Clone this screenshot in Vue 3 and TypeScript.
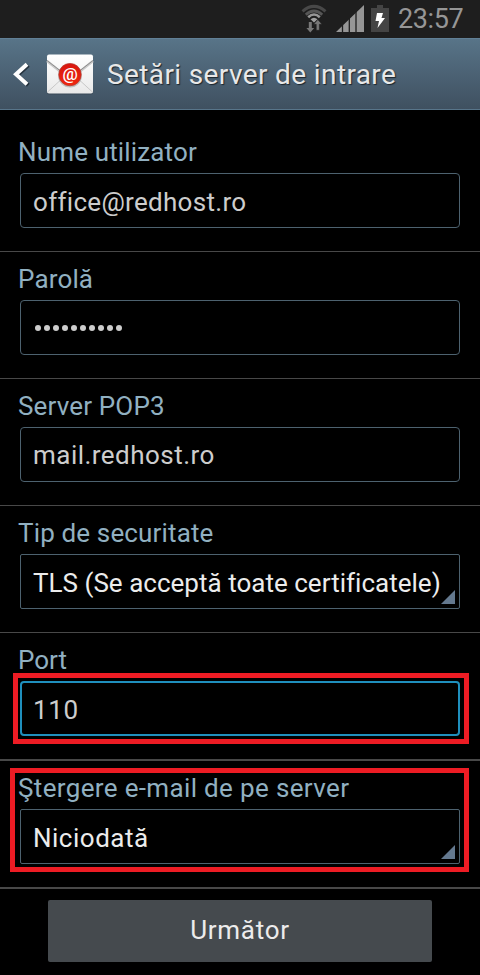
<script setup lang="ts">
interface Field {
  id: string
  label: string
  value: string
  kind: 'text' | 'password' | 'select'
  focused?: boolean
  mark?: 'box' | 'row'
}

const fields: Field[] = [
  { id: 'user', label: 'Nume utilizator', value: 'office@redhost.ro', kind: 'text' },
  { id: 'password', label: 'Parolă', value: '', kind: 'password' },
  { id: 'server', label: 'Server POP3', value: 'mail.redhost.ro', kind: 'text' },
  { id: 'security', label: 'Tip de securitate', value: 'TLS (Se acceptă toate certificatele)', kind: 'select' },
  { id: 'port', label: 'Port', value: '110', kind: 'text', focused: true, mark: 'box' },
  { id: 'delete', label: 'Ştergere e-mail de pe server', value: 'Niciodată', kind: 'select', mark: 'row' },
]
</script>

<template>
  <div class="screen">
    <div class="status">
      <svg class="wifi" width="28" height="30" viewBox="0 0 28 30">
        <g fill="none">
          <path d="M2.500 8.300Q14 -1.500 25.500 8.300" stroke="#484848" stroke-width="3" />
          <path d="M5.800 11.700Q14 4.300 22.200 11.700" stroke="#565656" stroke-width="2.800" />
          <path d="M8.200 14.200Q14 8.800 19.800 14.200" stroke="#969696" stroke-width="2.600" />
        </g>
        <path d="M10.500 16.300Q14 13.300 17.500 16.300L14 19.500Z" fill="#a0a0a0" />
        <path d="M8.800 19h3v6h2.400L10.300 29.500 6.400 25h2.400Z" fill="#777" />
        <path d="M16.200 27.300v-6h-2.600L17.800 16.500 22 21.300h-2.600v6Z" fill="#777" stroke="#1e1e1e" stroke-width=".6" />
      </svg>
      <svg class="signal" width="28" height="27" viewBox="0 0 28 27">
        <path d="M0 27L28 0V27Z" fill="#969696" />
        <path d="M6.500 20v7M13.300 13v14M20 6v21" stroke="#1e1e1e" stroke-width="1.300" />
      </svg>
      <svg class="battery" width="18" height="27" viewBox="0 0 18 27">
        <path d="M6 0h6v3h6v24H0V3h6Z" fill="#444" />
        <path d="M6 8h6L10.500 13H14L6.500 23l1.500-7H4.500Z" fill="#fff" />
      </svg>
      <span class="clock">23:57</span>
    </div>

    <header class="header">
      <svg class="back" width="17" height="25" viewBox="0 0 17 25">
        <path d="M14.500 3L3.500 13 14.500 23" fill="none" stroke="#25323e" stroke-width="4" transform="translate(.8 .3)" />
        <path d="M14 2.300L3 12.300 14 22.300" fill="none" stroke="#fff" stroke-width="4" />
      </svg>
      <svg class="mail" width="48" height="42" viewBox="0 0 48 42">
        <defs>
          <linearGradient id="paper" x1="0" y1="0" x2="0" y2="1">
            <stop offset="0" stop-color="#fff" />
            <stop offset="1" stop-color="#e9e9e9" />
          </linearGradient>
          <linearGradient id="seal" x1="0" y1="0" x2="0" y2="1">
            <stop offset="0" stop-color="#d8150e" />
            <stop offset="1" stop-color="#f02810" />
          </linearGradient>
        </defs>
        <rect x="1" y="2" width="46" height="39.500" rx="2" fill="#34414c" opacity=".6" />
        <rect x="1" y="1.500" width="46" height="39" rx="2" fill="url(#paper)" />
        <path d="M1 39.500L19 23M47 39.500L29 23" stroke="#c8c8c8" />
        <path d="M1 8L21 24q3 2 6 0L47 8" fill="none" stroke="#c9c9c9" stroke-width="2.500" />
        <path d="M1 7.500L21 23q3 2 6 0L47 7.500" fill="none" stroke="#858585" stroke-width=".9" />
        <circle cx="24" cy="22.600" r="12" fill="#888" opacity=".45" />
        <circle cx="24" cy="21.600" r="11.200" fill="url(#seal)" stroke="#b7392f" stroke-width=".7" />
        <text x="24" y="26.500" text-anchor="middle" class="at">@</text>
      </svg>
      <h1 class="title">Setări server de intrare</h1>
    </header>

    <main class="form">
      <section
        v-for="field in fields"
        :key="field.id"
        class="row"
        :class="[field.id, { thick: field.mark }]"
      >
        <div class="label"><span>{{ field.label }}</span></div>
        <div class="field" :class="[field.kind, { focused: field.focused }]">
          <span v-if="field.kind === 'password'" class="dots">
            <i v-for="n in 10" :key="n" class="dot"></i>
          </span>
          <span v-else class="value">{{ field.value }}</span>
          <svg v-if="field.kind === 'select'" class="corner" width="14" height="14" viewBox="0 0 14 14">
            <path d="M14 0V14H0Z" fill="#64798f" />
          </svg>
        </div>
        <div v-if="field.mark" class="mark" :class="'mark-' + field.mark"></div>
      </section>
    </main>

    <footer class="footer">
      <button class="next" type="button">Următor</button>
    </footer>
  </div>
</template>

<style>
body {
  background: #000;
}
</style>

<style scoped>
.screen {
  width: 480px;
  height: 975px;
  overflow: hidden;
  background: #000;
  font-family: Roboto, "Liberation Sans", sans-serif;
  font-size: 26px;
  font-variant-ligatures: none;
}
.status {
  display: flex;
  box-sizing: border-box;
  height: 38px;
  padding: 5px 16px 0 0;
  justify-content: flex-end;
  background: #1e1e1e;
}
.wifi {
  margin-top: -2px;
  margin-right: 8px;
}
.signal {
  margin-right: 7px;
}
.battery {
  margin-right: 9px;
}
.clock {
  width: 66px;
  color: #969696;
  font-size: 27px;
  letter-spacing: -0.4px;
  line-height: 28px;
  white-space: nowrap;
}
.header {
  display: flex;
  box-sizing: border-box;
  height: 72px;
  align-items: center;
  padding-left: 13px;
  border-top: 1px solid #618096;
  border-bottom: 1px solid #58758a;
  background: linear-gradient(#587488, #3f5060);
}
.back {
  margin-right: 16px;
}
.mail {
  margin-right: 13px;
}
.at {
  fill: #fff;
  font-size: 17px;
  font-weight: 500;
}
.title {
  margin: 0;
  padding-top: 2px;
  color: #e8e8e8;
  font-size: 28px;
  font-weight: 400;
  letter-spacing: 0.38px;
  line-height: 34px;
  text-shadow: 1px 1px 1px #1c252d;
  white-space: nowrap;
}
.form {
  padding-top: 15px;
}
.row {
  position: relative;
  box-sizing: border-box;
  height: 127px;
  border-bottom: 1px solid #484848;
}
.row.thick {
  height: 128px;
  border-bottom-width: 2px;
}
.label {
  height: 48px;
  padding-left: 18px;
  color: #91b0c1;
  letter-spacing: 0.15px;
  line-height: 54px;
  white-space: nowrap;
}
.port .label {
  letter-spacing: 0;
}
.delete .label {
  letter-spacing: 0.35px;
}
.field {
  display: flex;
  box-sizing: border-box;
  height: 55px;
  margin: 0 20px;
  padding: 0 4px 0 12px;
  align-items: center;
  border: 1px solid #4d626f;
  border-radius: 4px;
  color: #cdcdcd;
  white-space: nowrap;
}
.field.select {
  border-radius: 2px;
  color: #ececec;
}
.field.focused {
  padding-left: 11px;
  border: 2px solid #1f8fbd;
}
.value {
  flex: 1;
  min-width: 0;
  padding-top: 2px;
  letter-spacing: 0.4px;
  line-height: 32px;
}
.user .value {
  letter-spacing: 0.3px;
}
.server .value {
  padding-top: 1px;
  letter-spacing: 0.47px;
}
.security .value {
  letter-spacing: 0.02px;
}
.port .value {
  letter-spacing: 0.6px;
}
.delete .value {
  letter-spacing: 0.5px;
}
.corner {
  flex: none;
  align-self: flex-end;
  margin: 0 0 4px -14px;
}
.dots {
  display: flex;
  gap: 3px;
  padding-left: 2px;
}
.dot {
  width: 6px;
  height: 6px;
  border-radius: 3px;
  background: #cdcdcd;
}
.mark {
  position: absolute;
  box-sizing: border-box;
  border: 5px solid #ed1c24;
}
.mark-box {
  top: 40px;
  left: 13px;
  width: 456px;
  height: 71px;
}
.mark-row {
  top: 7px;
  left: 10px;
  width: 459px;
  height: 104px;
}
.footer {
  display: flex;
  padding-top: 11px;
  justify-content: center;
}
.next {
  width: 384px;
  height: 62px;
  padding: 0 0 2px;
  border: 0;
  border-radius: 2px;
  background: #454a4e;
  color: #ececec;
  font: inherit;
  letter-spacing: 0.7px;
}
</style>
